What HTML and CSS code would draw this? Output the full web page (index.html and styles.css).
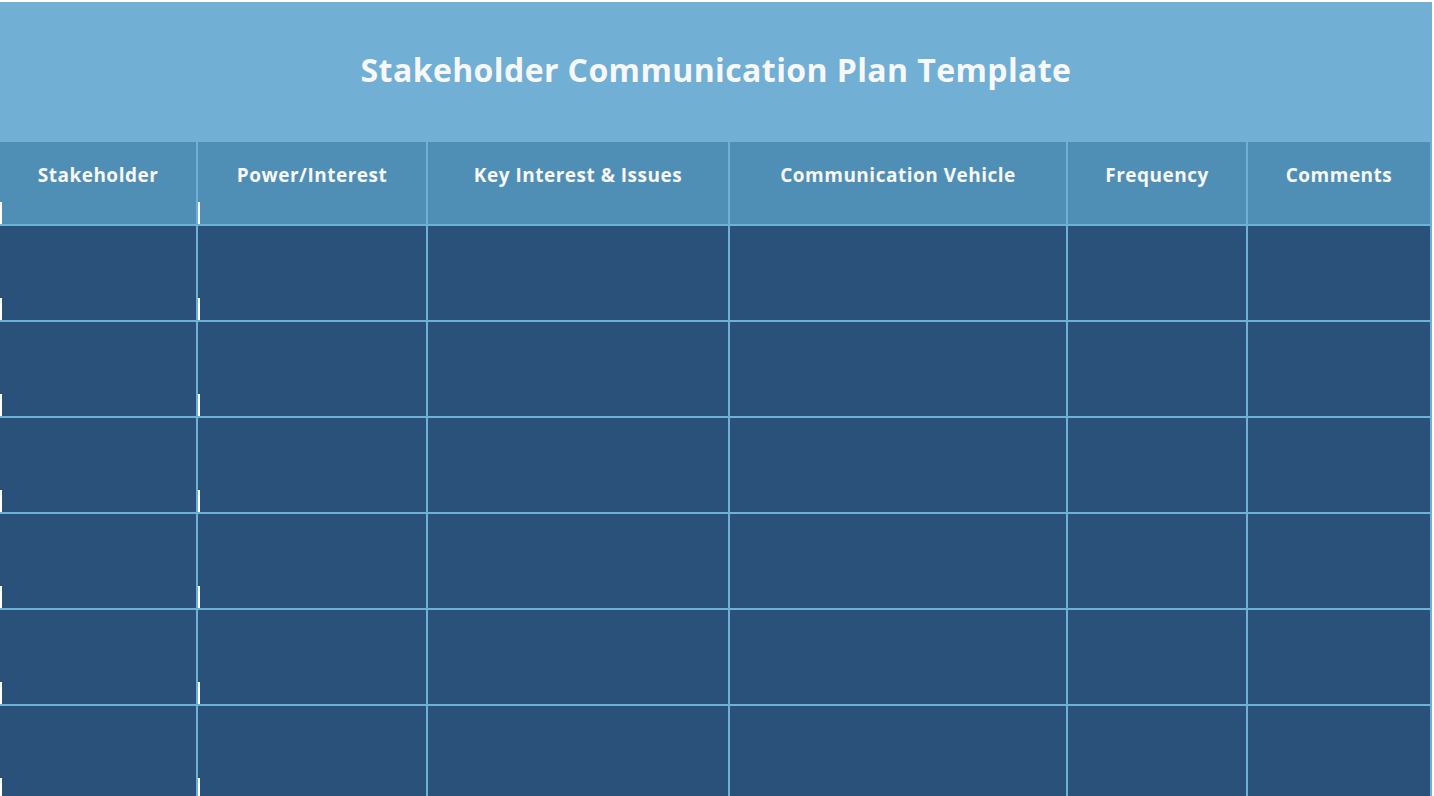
FILE: index.html
```html
<!DOCTYPE html>
<html lang="en">
<head>
<meta charset="utf-8">
<title>Stakeholder Communication Plan Template</title>
<link rel="stylesheet" href="styles.css">
</head>
<body>
<div class="page">
  <header class="title-bar">
    <h1 class="title">Stakeholder Communication Plan Template</h1>
  </header>
  <div class="grid">
    <div class="head tick">Stakeholder</div>
    <div class="head tick">Power/Interest</div>
    <div class="head">Key Interest &amp; Issues</div>
    <div class="head">Communication Vehicle</div>
    <div class="head">Frequency</div>
    <div class="head">Comments</div>

    <div class="cell tick"></div><div class="cell tick"></div><div class="cell"></div><div class="cell"></div><div class="cell"></div><div class="cell"></div>
    <div class="cell tick"></div><div class="cell tick"></div><div class="cell"></div><div class="cell"></div><div class="cell"></div><div class="cell"></div>
    <div class="cell tick"></div><div class="cell tick"></div><div class="cell"></div><div class="cell"></div><div class="cell"></div><div class="cell"></div>
    <div class="cell tick"></div><div class="cell tick"></div><div class="cell"></div><div class="cell"></div><div class="cell"></div><div class="cell"></div>
    <div class="cell tick"></div><div class="cell tick"></div><div class="cell"></div><div class="cell"></div><div class="cell"></div><div class="cell"></div>
    <div class="cell tick"></div><div class="cell tick"></div><div class="cell"></div><div class="cell"></div><div class="cell"></div><div class="cell"></div>
  </div>
</div>
</body>
</html>
```

FILE: styles.css
```css
html, body {
  margin: 0;
  padding: 0;
  background: #ffffff;
  overflow: hidden;
}

.page {
  width: 1432px;
  height: 794px;
  margin-top: 2px;
  overflow: hidden;
  font-family: "Open Sans", "Lato", sans-serif;
}

.title-bar {
  height: 140px;
  background: #71afd5;
  display: flex;
  align-items: center;
  justify-content: center;
}

.title {
  margin: 0 0 5px 0;
  color: #f7f8f9;
  font-size: 32px;
  font-weight: 700;
  letter-spacing: 0.4px;
}

.grid {
  display: grid;
  grid-template-columns: 196px 228px 300px 336px 178px 182px;
  grid-template-rows: 82px repeat(6, 94px);
  gap: 2px;
  padding-right: 2px;
  background: #6fb0d6;
}

.head {
  position: relative;
  background: #508fb5;
  color: #f7f8f9;
  font-size: 19px;
  font-weight: 700;
  letter-spacing: 0.5px;
  text-align: center;
  padding-top: 22px;
  line-height: 22px;
}

.cell {
  position: relative;
  background: #29517a;
}

.tick::before {
  content: "";
  position: absolute;
  left: 0;
  bottom: 0;
  width: 2px;
  height: 22px;
  background: #ffffff;
}
```
